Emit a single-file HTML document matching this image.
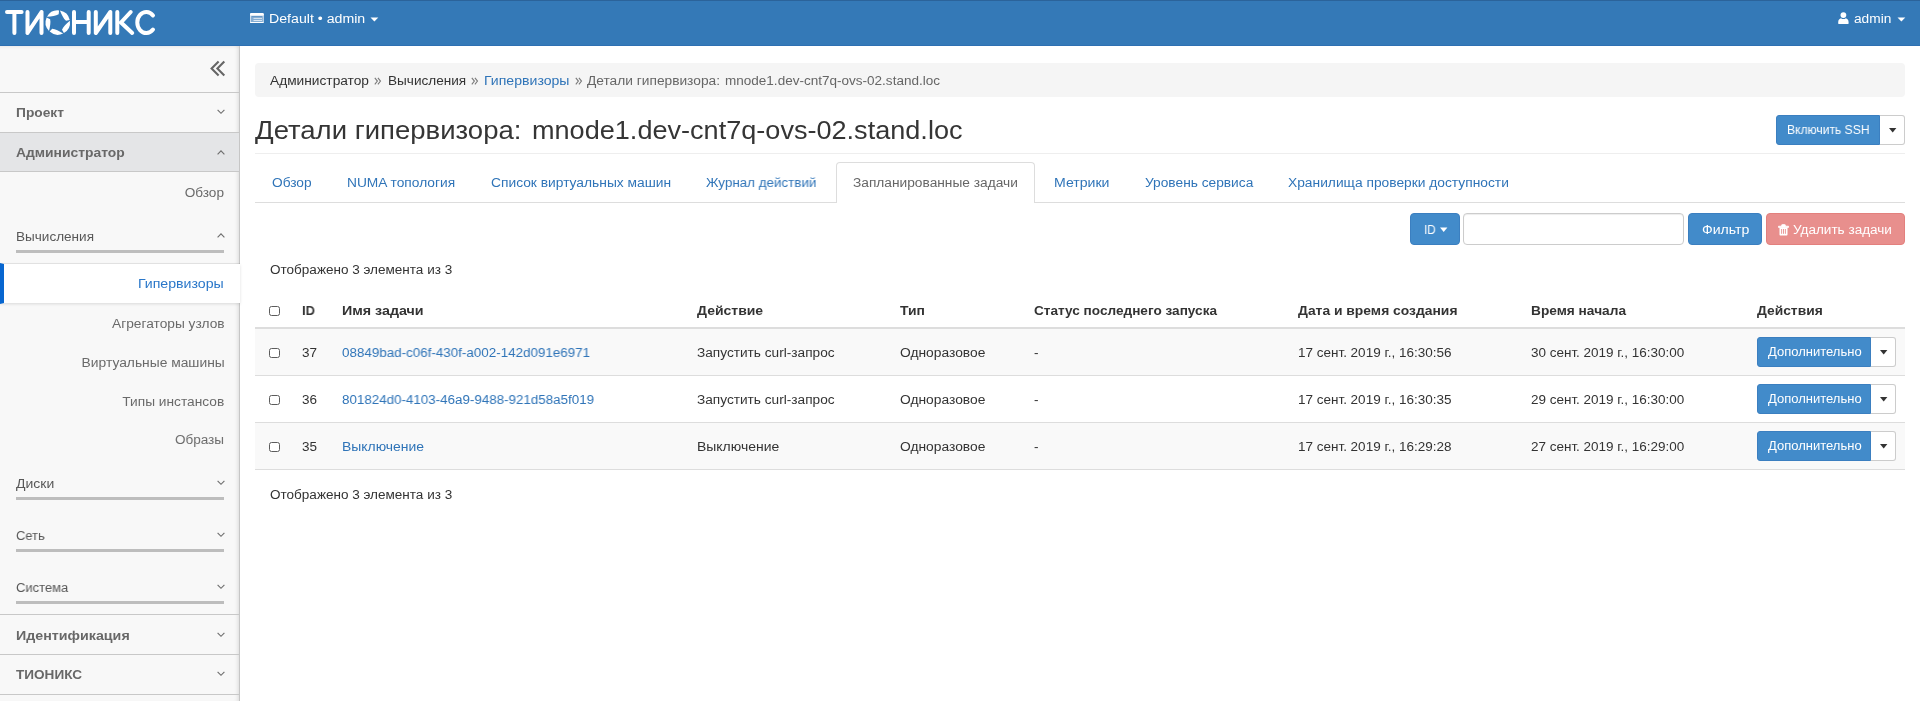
<!DOCTYPE html>
<html><head><meta charset="utf-8">
<style>
html,body{margin:0;padding:0;width:1920px;height:701px;overflow:hidden;background:#fff;}
body{font-family:"Liberation Sans",sans-serif;position:relative;}
.t{position:absolute;white-space:nowrap;will-change:transform;}
.a{position:absolute;}
.hdr{left:0;top:0;width:1920px;height:46px;background:#3479b7;border-bottom:1px solid #2e70b2;box-sizing:border-box;}
.hdrtop{left:0;top:0;width:1920px;height:1px;background:#2b639a;}
.sb{left:0;top:46px;width:239px;height:655px;background:#f8f8f8;border-right:1px solid #c6c6c6;box-shadow:inset -4px 0 4px -3px rgba(0,0,0,.12), inset 0 3px 3px -2px rgba(0,0,0,.06);}
.sl{left:0;width:239px;height:1px;background:#c8c8c8;}
.bar{left:16px;width:208px;height:3px;background:#bdbdbd;}
.chev{position:absolute;}
.btnp{background:#428bca;border:1px solid #3b7fc0;box-sizing:border-box;}
.cb{position:absolute;width:11px;height:10.6px;box-sizing:border-box;border:1.8px solid #5c5c5c;border-radius:2.5px;background:#fff;}
</style></head><body>
<!-- header -->
<div class="a hdr"></div>
<div class="a hdrtop"></div>
<svg class="a" style="left:0;top:0" width="160" height="46" viewBox="0 0 160 46">
 <g fill="none" stroke="#fff" stroke-width="4" stroke-linecap="round" stroke-linejoin="round">
  <path d="M7 12H21.6M14.4 12V33"/>
  <path d="M27.5 33V12M27.5 33L41.5 12M41.5 12V33"/>
  <path d="M74 12V33M88.7 12V33M74 22H88.7"/>
  <path d="M95.8 33V12M95.8 33L110.3 12M110.3 12V33"/>
  <path d="M117.3 12V33M130.7 12L121 22.5L132.2 33"/>
  <path d="M153 15.5A9 10.5 0 1 0 153 29.5"/>
 </g>
 <path fill="#fff" d="M47.03 16.82A12.2 12.2 0 0 1 59.08 10.42L58.68 14.20C55.90 15.92 51.83 16.36 47.03 16.82ZM59.92 10.54A12.2 12.2 0 0 1 69.73 20.01L66.02 20.80C63.52 18.69 61.84 14.96 59.92 10.54ZM69.88 20.85A12.2 12.2 0 0 1 63.90 33.12L62.00 29.82C63.24 26.80 66.27 24.04 69.88 20.85ZM63.15 33.52A12.2 12.2 0 0 1 49.64 31.62L52.18 28.79C55.44 29.03 59.00 31.07 63.15 33.52ZM49.02 31.02A12.2 12.2 0 0 1 46.65 17.59L50.13 19.13C50.90 22.31 50.07 26.32 49.02 31.02Z"/>
</svg>
<!-- project dropdown icon -->
<svg class="a" style="left:250px;top:13px" width="14" height="10.2" viewBox="0 0 14 10.2">
 <rect x="0" y="0" width="13.8" height="10.1" rx="1.3" fill="#fff" fill-opacity="0.4"/>
 <rect x="0" y="0" width="13.8" height="2.7" rx="1.2" fill="#fff"/>
 <rect x="0" y="8.9" width="13.8" height="1.2" rx="0.6" fill="#fff"/>
 <rect x="0" y="1" width="1" height="8.5" fill="#fff" fill-opacity="0.6"/>
 <rect x="12.8" y="1" width="1" height="8.5" fill="#fff" fill-opacity="0.6"/>
 <rect x="3.5" y="4.9" width="8.5" height="1" fill="#fff" fill-opacity="0.7"/>
 <rect x="3.5" y="7" width="8.5" height="1" fill="#fff" fill-opacity="0.7"/>
 <rect x="2" y="3.2" width="10" height="0.9" fill="#3479b7" fill-opacity="0.5"/>
</svg>
<svg class="a" style="left:370.3px;top:16.5px" width="9" height="5" viewBox="0 0 9 5"><path d="M0.5 0.5H8.3L4.4 4.6Z" fill="#fff"/></svg>
<!-- user icon -->
<svg class="a" style="left:1838px;top:12px" width="11" height="13" viewBox="0 0 11 13">
 <circle cx="5.4" cy="3.1" r="2.9" fill="#fff"/>
 <path d="M0.2 10.2C0.2 7.8 1.6 6.6 3 6.3C3.8 6.9 4.5 7.1 5.4 7.1C6.3 7.1 7 6.9 7.8 6.3C9.2 6.6 10.6 7.8 10.6 10.2V11.2C10.6 11.8 10.2 12.1 9.6 12.1H1.2C0.6 12.1 0.2 11.8 0.2 11.2Z" fill="#fff"/>
</svg>
<svg class="a" style="left:1896.5px;top:16.5px" width="9" height="5" viewBox="0 0 9 5"><path d="M0.5 0.5H8.3L4.4 4.6Z" fill="#fff"/></svg>

<!-- sidebar -->
<div class="a sb"></div>
<svg class="a" style="left:209.8px;top:60px" width="17" height="17" viewBox="0 0 17 17">
 <path d="M8.6 1.6L1.6 8.5L8.6 15.4M14.3 1.6L7.4 8.5L14.3 15.4" fill="none" stroke="#666" stroke-width="2.1"/>
</svg>
<div class="a sl" style="top:92px"></div>
<div class="a" style="left:0;top:132px;width:239px;height:39px;background:#e4e5e7;"></div>
<div class="a sl" style="top:132px"></div>
<div class="a sl" style="top:171px"></div>
<div class="a bar" style="top:250px"></div>
<div class="a" style="left:0;top:264px;width:240px;height:39px;background:#fff;box-shadow:0 1px 3px rgba(0,0,0,.13), 0 -1px 0 rgba(0,0,0,.07);"></div>
<div class="a" style="left:0;top:263px;width:4px;height:41px;background:#0766d0;clip-path:polygon(0 0,100% 1px,100% calc(100% - 1px),0 100%);"></div>
<div class="a bar" style="top:497px"></div>
<div class="a bar" style="top:549px"></div>
<div class="a bar" style="top:601px"></div>
<div class="a sl" style="top:614px"></div>
<div class="a sl" style="top:654px"></div>
<div class="a sl" style="top:694px"></div>

<!-- breadcrumb -->
<div class="a" style="left:255px;top:63px;width:1650px;height:34px;background:#f5f5f5;border-radius:4px;"></div>
<svg class="a" style="left:373.5px;top:76.5px" width="8" height="9" viewBox="0 0 8 9"><path d="M0.8 0.8L3.4 4.1L0.8 7.4M3.9 0.8L6.5 4.1L3.9 7.4" fill="none" stroke="#7a7a7a" stroke-width="1.1"/></svg>
<svg class="a" style="left:470.5px;top:76.5px" width="8" height="9" viewBox="0 0 8 9"><path d="M0.8 0.8L3.4 4.1L0.8 7.4M3.9 0.8L6.5 4.1L3.9 7.4" fill="none" stroke="#7a7a7a" stroke-width="1.1"/></svg>
<svg class="a" style="left:574.5px;top:76.5px" width="8" height="9" viewBox="0 0 8 9"><path d="M0.8 0.8L3.4 4.1L0.8 7.4M3.9 0.8L6.5 4.1L3.9 7.4" fill="none" stroke="#7a7a7a" stroke-width="1.1"/></svg>

<!-- title -->
<div class="a" style="left:255px;top:153px;width:1650px;height:1px;background:#eee;"></div>
<div class="a btnp" style="left:1776px;top:115px;width:104px;height:30px;border-radius:3px 0 0 3px;"></div>
<div class="a" style="left:1880px;top:115px;width:25px;height:30px;box-sizing:border-box;border:1px solid #ccc;border-left:none;border-radius:0 3px 3px 0;background:#fff;"></div>
<svg class="a" style="left:1889px;top:128px" width="8" height="5" viewBox="0 0 8 5"><path d="M0 0H7.4L3.7 4.4Z" fill="#333"/></svg>

<!-- tabs -->
<div class="a" style="left:255px;top:202px;width:1650px;height:1px;background:#ddd;"></div>
<div class="a" style="left:836px;top:162px;width:199px;height:41px;box-sizing:border-box;border:1px solid #ddd;border-bottom:none;border-radius:4px 4px 0 0;background:#fff;"></div>

<!-- filter -->
<div class="a btnp" style="left:1410px;top:213px;width:50px;height:32px;border-radius:4px;"></div>
<svg class="a" style="left:1440px;top:227px" width="8" height="6" viewBox="0 0 8 6"><path d="M0 0.6H7.4L3.7 5Z" fill="#fff"/></svg>
<div class="a" style="left:1463px;top:213px;width:221px;height:32px;box-sizing:border-box;border:1px solid #ccc;border-radius:4px;background:#fff;box-shadow:inset 0 1px 1px rgba(0,0,0,.075);"></div>
<div class="a btnp" style="left:1688px;top:213px;width:74px;height:32px;border-radius:4px;"></div>
<div class="a" style="left:1766px;top:213px;width:139px;height:32px;box-sizing:border-box;border:1px solid #e3807d;border-radius:4px;background:#e88f8d;"></div>
<svg class="a" style="left:1778px;top:224px" width="11" height="12" viewBox="0 0 11 12">
 <path d="M0.5 2.2H10.5V3.4H0.5Z M3.6 2.2V1.2C3.6 0.7 4 0.4 4.5 0.4H6.5C7 0.4 7.4 0.7 7.4 1.2V2.2" fill="#fff" stroke="#fff" stroke-width="0.8"/>
 <path d="M1.5 3.4H9.5V10.4C9.5 11 9.1 11.4 8.5 11.4H2.5C1.9 11.4 1.5 11 1.5 10.4Z" fill="#fff"/>
 <path d="M3.6 5V9.8M5.5 5V9.8M7.4 5V9.8" stroke="#e88f8d" stroke-width="0.9"/>
</svg>

<!-- table -->
<div class="cb" style="left:269px;top:305.5px"></div>
<div class="a" style="left:255px;top:327px;width:1650px;height:2px;background:#ddd;"></div>
<div class="a" style="left:255px;top:329px;width:1650px;height:46px;background:#f9f9f9;"></div>
<div class="a" style="left:255px;top:375px;width:1650px;height:1px;background:#ddd;"></div>
<div class="a" style="left:255px;top:422px;width:1650px;height:1px;background:#ddd;"></div>
<div class="a" style="left:255px;top:423px;width:1650px;height:46px;background:#f9f9f9;"></div>
<div class="a" style="left:255px;top:469px;width:1650px;height:1px;background:#ddd;"></div>
<div class="cb" style="left:269px;top:347.5px"></div>
<div class="cb" style="left:269px;top:394.5px"></div>
<div class="cb" style="left:269px;top:441.5px"></div>
<!-- row buttons -->
<div class="a btnp" style="left:1757px;top:337px;width:114px;height:30px;border-radius:3px 0 0 3px;"></div>
<div class="a" style="left:1871px;top:337px;width:25px;height:30px;box-sizing:border-box;border:1px solid #ccc;border-left:none;border-radius:0 3px 3px 0;background:#fff;"></div>
<svg class="a" style="left:1880px;top:350px" width="8" height="5" viewBox="0 0 8 5"><path d="M0 0H7.4L3.7 4.4Z" fill="#333"/></svg>
<div class="a btnp" style="left:1757px;top:384px;width:114px;height:30px;border-radius:3px 0 0 3px;"></div>
<div class="a" style="left:1871px;top:384px;width:25px;height:30px;box-sizing:border-box;border:1px solid #ccc;border-left:none;border-radius:0 3px 3px 0;background:#fff;"></div>
<svg class="a" style="left:1880px;top:397px" width="8" height="5" viewBox="0 0 8 5"><path d="M0 0H7.4L3.7 4.4Z" fill="#333"/></svg>
<div class="a btnp" style="left:1757px;top:431px;width:114px;height:30px;border-radius:3px 0 0 3px;"></div>
<div class="a" style="left:1871px;top:431px;width:25px;height:30px;box-sizing:border-box;border:1px solid #ccc;border-left:none;border-radius:0 3px 3px 0;background:#fff;"></div>
<svg class="a" style="left:1880px;top:444px" width="8" height="5" viewBox="0 0 8 5"><path d="M0 0H7.4L3.7 4.4Z" fill="#333"/></svg>

<svg class="a chev" style="left:216.8px;top:109.30000000000001px" width="8" height="6" viewBox="0 0 8 6"><path d="M0.6 0.9L4 4.3L7.4 0.9" fill="none" stroke="#6e6e6e" stroke-width="1.15"/></svg>
<svg class="a chev" style="left:216.8px;top:149.5px" width="8" height="6" viewBox="0 0 8 6"><path d="M0.6 4.3L4 0.9L7.4 4.3" fill="none" stroke="#6e6e6e" stroke-width="1.15"/></svg>
<svg class="a chev" style="left:216.8px;top:233.4px" width="8" height="6" viewBox="0 0 8 6"><path d="M0.6 4.3L4 0.9L7.4 4.3" fill="none" stroke="#6e6e6e" stroke-width="1.15"/></svg>
<svg class="a chev" style="left:216.8px;top:480.2px" width="8" height="6" viewBox="0 0 8 6"><path d="M0.6 0.9L4 4.3L7.4 0.9" fill="none" stroke="#6e6e6e" stroke-width="1.15"/></svg>
<svg class="a chev" style="left:216.8px;top:532.1px" width="8" height="6" viewBox="0 0 8 6"><path d="M0.6 0.9L4 4.3L7.4 0.9" fill="none" stroke="#6e6e6e" stroke-width="1.15"/></svg>
<svg class="a chev" style="left:216.8px;top:584.1px" width="8" height="6" viewBox="0 0 8 6"><path d="M0.6 0.9L4 4.3L7.4 0.9" fill="none" stroke="#6e6e6e" stroke-width="1.15"/></svg>
<svg class="a chev" style="left:216.8px;top:632.1px" width="8" height="6" viewBox="0 0 8 6"><path d="M0.6 0.9L4 4.3L7.4 0.9" fill="none" stroke="#6e6e6e" stroke-width="1.15"/></svg>
<svg class="a chev" style="left:216.8px;top:671.1px" width="8" height="6" viewBox="0 0 8 6"><path d="M0.6 0.9L4 4.3L7.4 0.9" fill="none" stroke="#6e6e6e" stroke-width="1.15"/></svg>
<div class='t' style='left:269.20px;top:11.58px;font-size:13.49px;line-height:13.49px;font-weight:400;color:#fff;transform:scaleX(1.0494);transform-origin:left'>Default • admin</div>
<div class='t' style='left:1854.00px;top:11.58px;font-size:13.49px;line-height:13.49px;font-weight:400;color:#fff;transform:scaleX(1.0154);transform-origin:left'>admin</div>
<div class='t' style='left:16.00px;top:105.98px;font-size:13.49px;line-height:13.49px;font-weight:700;color:#686868;transform:scaleX(1.0206);transform-origin:left'>Проект</div>
<div class='t' style='left:16.00px;top:145.68px;font-size:13.49px;line-height:13.49px;font-weight:700;color:#686868;transform:scaleX(1.0284);transform-origin:left'>Администратор</div>
<div class='t' style='left:185.25px;top:185.68px;font-size:13.49px;line-height:13.49px;font-weight:400;color:#6a6a6a;transform:scaleX(1.0089);transform-origin:right'>Обзор</div>
<div class='t' style='left:16.10px;top:229.58px;font-size:13.49px;line-height:13.49px;font-weight:400;color:#585858;transform:scaleX(1.0046);transform-origin:left'>Вычисления</div>
<div class='t' style='left:142.40px;top:276.98px;font-size:13.49px;line-height:13.49px;font-weight:400;color:#2a77c9;transform:scaleX(1.0502);transform-origin:right'>Гипервизоры</div>
<div class='t' style='left:113.54px;top:316.98px;font-size:13.49px;line-height:13.49px;font-weight:400;color:#6a6a6a;transform:scaleX(1.0176);transform-origin:right'>Агрегаторы узлов</div>
<div class='t' style='left:84.51px;top:355.88px;font-size:13.49px;line-height:13.49px;font-weight:400;color:#6a6a6a;transform:scaleX(1.0244);transform-origin:right'>Виртуальные машины</div>
<div class='t' style='left:123.93px;top:394.98px;font-size:13.49px;line-height:13.49px;font-weight:400;color:#6a6a6a;transform:scaleX(1.0173);transform-origin:right'>Типы инстансов</div>
<div class='t' style='left:175.16px;top:432.78px;font-size:13.49px;line-height:13.49px;font-weight:400;color:#6a6a6a;transform:scaleX(0.9992);transform-origin:right'>Образы</div>
<div class='t' style='left:15.50px;top:476.88px;font-size:13.49px;line-height:13.49px;font-weight:400;color:#585858;transform:scaleX(1.0368);transform-origin:left'>Диски</div>
<div class='t' style='left:15.50px;top:528.68px;font-size:13.49px;line-height:13.49px;font-weight:400;color:#585858;transform:scaleX(0.9567);transform-origin:left'>Сеть</div>
<div class='t' style='left:15.50px;top:580.58px;font-size:13.49px;line-height:13.49px;font-weight:400;color:#585858;transform:scaleX(0.9629);transform-origin:left'>Система</div>
<div class='t' style='left:15.50px;top:628.58px;font-size:13.49px;line-height:13.49px;font-weight:700;color:#686868;transform:scaleX(1.0569);transform-origin:left'>Идентификация</div>
<div class='t' style='left:15.50px;top:668.18px;font-size:13.49px;line-height:13.49px;font-weight:700;color:#686868;transform:scaleX(1.0070);transform-origin:left'>ТИОНИКС</div>
<div class='t' style='left:270.00px;top:73.58px;font-size:13.49px;line-height:13.49px;font-weight:400;color:#333;transform:scaleX(1.0175);transform-origin:left'>Администратор</div>
<div class='t' style='left:387.50px;top:73.58px;font-size:13.49px;line-height:13.49px;font-weight:400;color:#333;transform:scaleX(1.0072);transform-origin:left'>Вычисления</div>
<div class='t' style='left:483.50px;top:73.58px;font-size:13.49px;line-height:13.49px;font-weight:400;color:#2f74b8;transform:scaleX(1.0453);transform-origin:left'>Гипервизоры</div>
<div class='t' style='left:587.20px;top:73.58px;font-size:13.49px;line-height:13.49px;font-weight:400;color:#666;transform:scaleX(1.0185);transform-origin:left'>Детали гипервизора:</div>
<div class='t' style='left:725.00px;top:73.58px;font-size:13.49px;line-height:13.49px;font-weight:400;color:#666;transform:scaleX(1.0029);transform-origin:left'>mnode1.dev-cnt7q-ovs-02.stand.loc</div>
<div class='t' style='left:255.00px;top:118.23px;font-size:25.95px;line-height:25.95px;font-weight:400;color:#353535;transform:scaleX(1.0606);transform-origin:left'>Детали гипервизора:</div>
<div class='t' style='left:532.00px;top:118.23px;font-size:25.95px;line-height:25.95px;font-weight:400;color:#353535;transform:scaleX(1.0440);transform-origin:left'>mnode1.dev-cnt7q-ovs-02.stand.loc</div>
<div class='t' style='left:1787.00px;top:124.16px;font-size:12.46px;line-height:12.46px;font-weight:400;color:#fff;transform:scaleX(0.9714);transform-origin:left'>Включить SSH</div>
<div class='t' style='left:271.70px;top:175.78px;font-size:13.49px;line-height:13.49px;font-weight:400;color:#2f74b8;transform:scaleX(1.0166);transform-origin:left'>Обзор</div>
<div class='t' style='left:346.90px;top:175.78px;font-size:13.49px;line-height:13.49px;font-weight:400;color:#2f74b8;transform:scaleX(1.0197);transform-origin:left'>NUMA топология</div>
<div class='t' style='left:490.60px;top:175.78px;font-size:13.49px;line-height:13.49px;font-weight:400;color:#2f74b8;transform:scaleX(1.0232);transform-origin:left'>Список виртуальных машин</div>
<div class='t' style='left:706.40px;top:175.78px;font-size:13.49px;line-height:13.49px;font-weight:400;color:#2f74b8;transform:scaleX(0.9946);transform-origin:left'>Журнал действий</div>
<div class='t' style='left:852.80px;top:175.78px;font-size:13.49px;line-height:13.49px;font-weight:400;color:#666;transform:scaleX(1.0176);transform-origin:left'>Запланированные задачи</div>
<div class='t' style='left:1053.70px;top:175.78px;font-size:13.49px;line-height:13.49px;font-weight:400;color:#2f74b8;transform:scaleX(1.0456);transform-origin:left'>Метрики</div>
<div class='t' style='left:1144.70px;top:175.78px;font-size:13.49px;line-height:13.49px;font-weight:400;color:#2f74b8;transform:scaleX(1.0181);transform-origin:left'>Уровень сервиса</div>
<div class='t' style='left:1288.00px;top:175.78px;font-size:13.49px;line-height:13.49px;font-weight:400;color:#2f74b8;transform:scaleX(1.0222);transform-origin:left'>Хранилища проверки доступности</div>
<div class='t' style='left:1423.80px;top:222.58px;font-size:13.49px;line-height:13.49px;font-weight:400;color:#fff;transform:scaleX(0.8667);transform-origin:left'>ID</div>
<div class='t' style='left:1701.50px;top:222.58px;font-size:13.49px;line-height:13.49px;font-weight:400;color:#fff;transform:scaleX(1.0461);transform-origin:left'>Фильтр</div>
<div class='t' style='left:1792.60px;top:222.78px;font-size:13.49px;line-height:13.49px;font-weight:400;color:#fff;transform:scaleX(1.0036);transform-origin:left'>Удалить задачи</div>
<div class='t' style='left:270.00px;top:263.08px;font-size:13.49px;line-height:13.49px;font-weight:400;color:#333;transform:scaleX(1.0033);transform-origin:left'>Отображено 3 элемента из 3</div>
<div class='t' style='left:302.40px;top:303.58px;font-size:13.49px;line-height:13.49px;font-weight:700;color:#333;transform:scaleX(0.9556);transform-origin:left'>ID</div>
<div class='t' style='left:342.10px;top:303.58px;font-size:13.49px;line-height:13.49px;font-weight:700;color:#333;transform:scaleX(1.0576);transform-origin:left'>Имя задачи</div>
<div class='t' style='left:696.90px;top:303.58px;font-size:13.49px;line-height:13.49px;font-weight:700;color:#333;transform:scaleX(1.0369);transform-origin:left'>Действие</div>
<div class='t' style='left:900.00px;top:303.58px;font-size:13.49px;line-height:13.49px;font-weight:700;color:#333;transform:scaleX(1.0301);transform-origin:left'>Тип</div>
<div class='t' style='left:1034.00px;top:303.58px;font-size:13.49px;line-height:13.49px;font-weight:700;color:#333;transform:scaleX(1.0083);transform-origin:left'>Статус последнего запуска</div>
<div class='t' style='left:1297.50px;top:303.58px;font-size:13.49px;line-height:13.49px;font-weight:700;color:#333;transform:scaleX(1.0286);transform-origin:left'>Дата и время создания</div>
<div class='t' style='left:1531.00px;top:303.58px;font-size:13.49px;line-height:13.49px;font-weight:700;color:#333;transform:scaleX(1.0150);transform-origin:left'>Время начала</div>
<div class='t' style='left:1757.00px;top:303.58px;font-size:13.49px;line-height:13.49px;font-weight:700;color:#333;transform:scaleX(1.0246);transform-origin:left'>Действия</div>
<div class='t' style='left:302.40px;top:345.58px;font-size:13.49px;line-height:13.49px;font-weight:400;color:#333;transform:scaleX(1.0000);transform-origin:left'>37</div>
<div class='t' style='left:342.00px;top:345.58px;font-size:13.49px;line-height:13.49px;font-weight:400;color:#2f74b8;transform:scaleX(0.9932);transform-origin:left'>08849bad-c06f-430f-a002-142d091e6971</div>
<div class='t' style='left:697.00px;top:345.58px;font-size:13.49px;line-height:13.49px;font-weight:400;color:#333;transform:scaleX(1.0126);transform-origin:left'>Запустить curl-запрос</div>
<div class='t' style='left:900.00px;top:345.58px;font-size:13.49px;line-height:13.49px;font-weight:400;color:#333;transform:scaleX(1.0239);transform-origin:left'>Одноразовое</div>
<div class='t' style='left:1034.00px;top:345.58px;font-size:13.49px;line-height:13.49px;font-weight:400;color:#333;transform:scaleX(1.0000);transform-origin:left'>-</div>
<div class='t' style='left:1297.50px;top:345.58px;font-size:13.49px;line-height:13.49px;font-weight:400;color:#333;transform:scaleX(1.0003);transform-origin:left'>17 сент. 2019 г., 16:30:56</div>
<div class='t' style='left:1531.00px;top:345.58px;font-size:13.49px;line-height:13.49px;font-weight:400;color:#333;transform:scaleX(0.9977);transform-origin:left'>30 сент. 2019 г., 16:30:00</div>
<div class='t' style='left:1767.90px;top:345.96px;font-size:12.46px;line-height:12.46px;font-weight:400;color:#fff;transform:scaleX(1.0445);transform-origin:left'>Дополнительно</div>
<div class='t' style='left:302.40px;top:392.58px;font-size:13.49px;line-height:13.49px;font-weight:400;color:#333;transform:scaleX(1.0000);transform-origin:left'>36</div>
<div class='t' style='left:342.00px;top:392.58px;font-size:13.49px;line-height:13.49px;font-weight:400;color:#2f74b8;transform:scaleX(0.9913);transform-origin:left'>801824d0-4103-46a9-9488-921d58a5f019</div>
<div class='t' style='left:697.00px;top:392.58px;font-size:13.49px;line-height:13.49px;font-weight:400;color:#333;transform:scaleX(1.0126);transform-origin:left'>Запустить curl-запрос</div>
<div class='t' style='left:900.00px;top:392.58px;font-size:13.49px;line-height:13.49px;font-weight:400;color:#333;transform:scaleX(1.0239);transform-origin:left'>Одноразовое</div>
<div class='t' style='left:1034.00px;top:392.58px;font-size:13.49px;line-height:13.49px;font-weight:400;color:#333;transform:scaleX(1.0000);transform-origin:left'>-</div>
<div class='t' style='left:1297.50px;top:392.58px;font-size:13.49px;line-height:13.49px;font-weight:400;color:#333;transform:scaleX(1.0003);transform-origin:left'>17 сент. 2019 г., 16:30:35</div>
<div class='t' style='left:1531.00px;top:392.58px;font-size:13.49px;line-height:13.49px;font-weight:400;color:#333;transform:scaleX(0.9977);transform-origin:left'>29 сент. 2019 г., 16:30:00</div>
<div class='t' style='left:1767.90px;top:392.96px;font-size:12.46px;line-height:12.46px;font-weight:400;color:#fff;transform:scaleX(1.0445);transform-origin:left'>Дополнительно</div>
<div class='t' style='left:302.40px;top:439.58px;font-size:13.49px;line-height:13.49px;font-weight:400;color:#333;transform:scaleX(1.0000);transform-origin:left'>35</div>
<div class='t' style='left:342.00px;top:439.58px;font-size:13.49px;line-height:13.49px;font-weight:400;color:#2f74b8;transform:scaleX(1.0335);transform-origin:left'>Выключение</div>
<div class='t' style='left:697.00px;top:439.58px;font-size:13.49px;line-height:13.49px;font-weight:400;color:#333;transform:scaleX(1.0348);transform-origin:left'>Выключение</div>
<div class='t' style='left:900.00px;top:439.58px;font-size:13.49px;line-height:13.49px;font-weight:400;color:#333;transform:scaleX(1.0239);transform-origin:left'>Одноразовое</div>
<div class='t' style='left:1034.00px;top:439.58px;font-size:13.49px;line-height:13.49px;font-weight:400;color:#333;transform:scaleX(1.0000);transform-origin:left'>-</div>
<div class='t' style='left:1297.50px;top:439.58px;font-size:13.49px;line-height:13.49px;font-weight:400;color:#333;transform:scaleX(1.0003);transform-origin:left'>17 сент. 2019 г., 16:29:28</div>
<div class='t' style='left:1531.00px;top:439.58px;font-size:13.49px;line-height:13.49px;font-weight:400;color:#333;transform:scaleX(0.9977);transform-origin:left'>27 сент. 2019 г., 16:29:00</div>
<div class='t' style='left:1767.90px;top:439.96px;font-size:12.46px;line-height:12.46px;font-weight:400;color:#fff;transform:scaleX(1.0445);transform-origin:left'>Дополнительно</div>
<div class='t' style='left:270.00px;top:487.88px;font-size:13.49px;line-height:13.49px;font-weight:400;color:#333;transform:scaleX(1.0033);transform-origin:left'>Отображено 3 элемента из 3</div>
</body></html>
